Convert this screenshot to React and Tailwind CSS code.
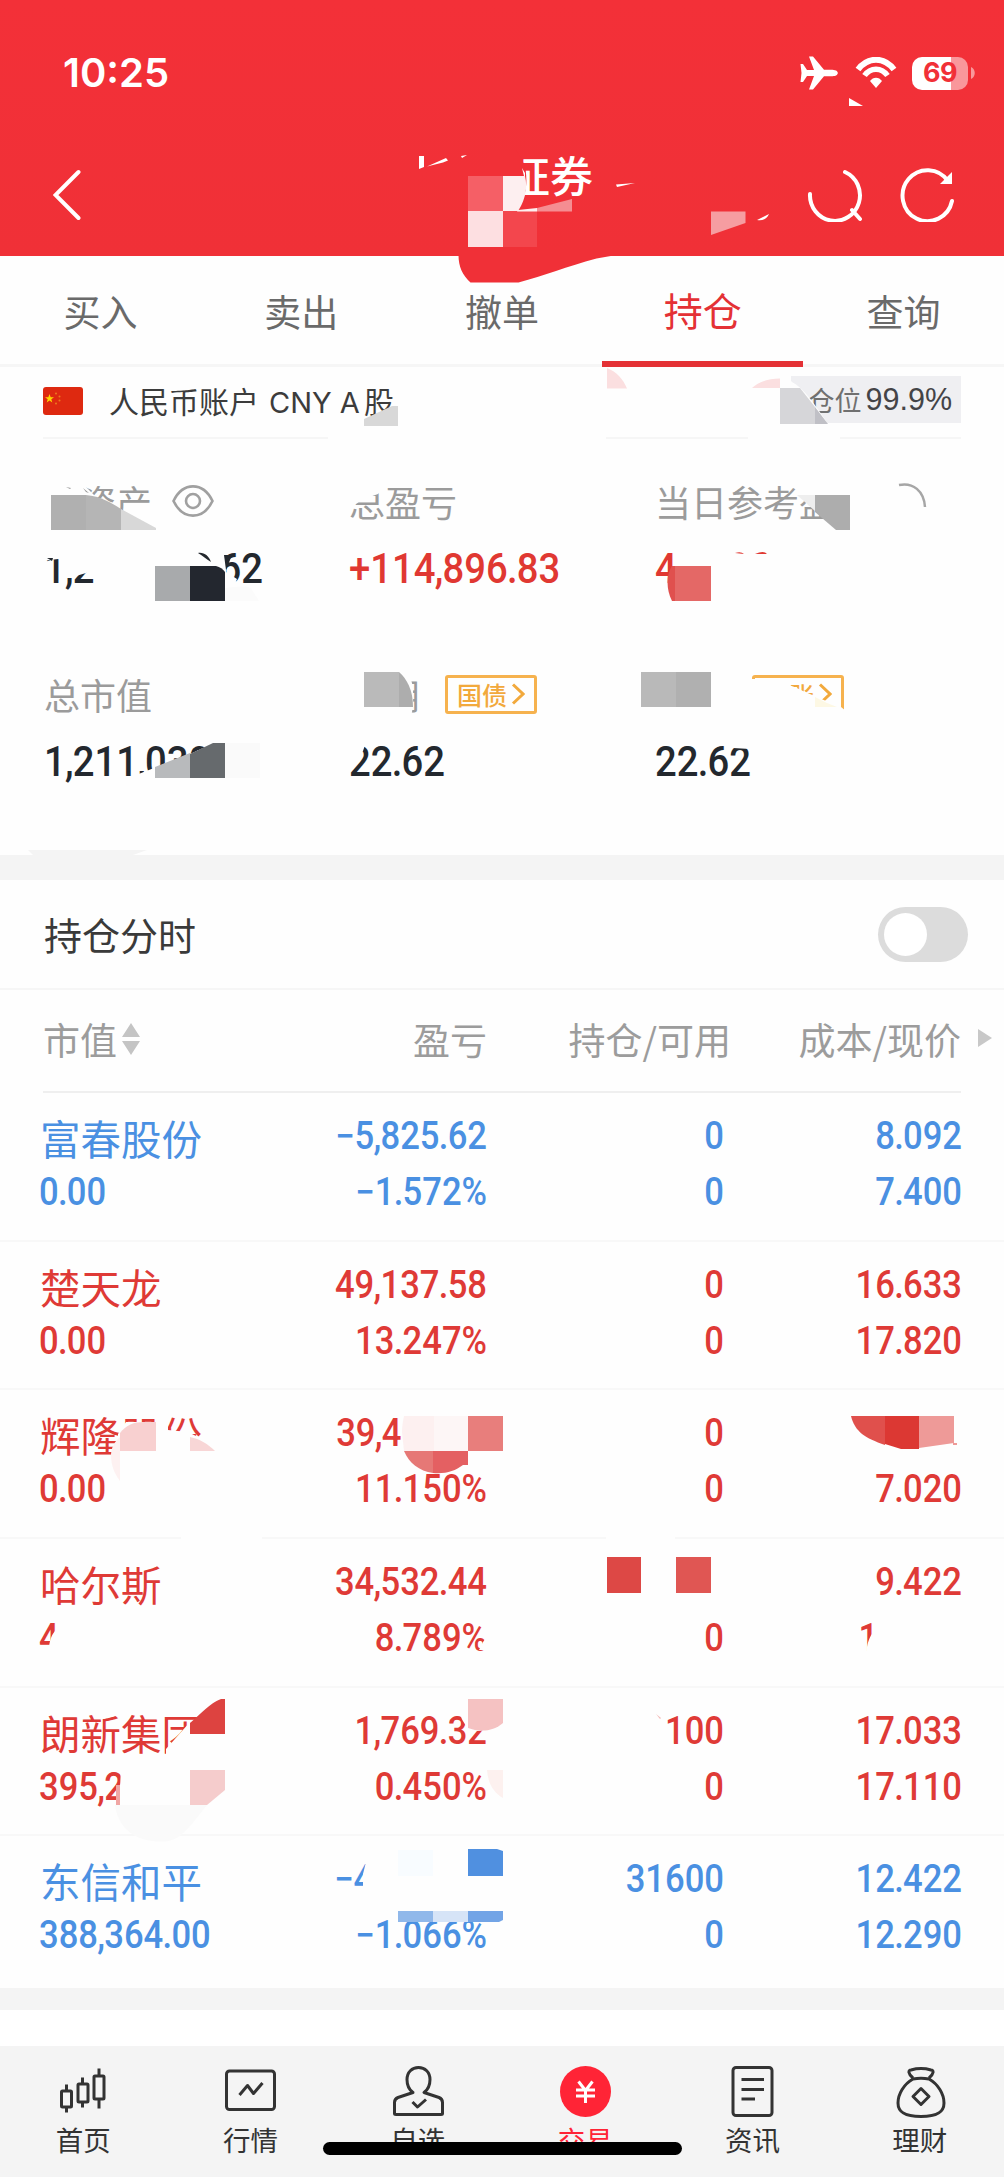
import React from "react";
import clsx from "clsx";

const TABS = ["买入", "卖出", "撤单", "持仓", "查询"];

const HOLDINGS = [
  { name: "富春股份", value: "0.00", profit: "−5,825.62", rate: "−1.572%", amount: "0", usable: "0", cost: "8.092", price: "7.400", down: true },
  { name: "楚天龙", value: "0.00", profit: "49,137.58", rate: "13.247%", amount: "0", usable: "0", cost: "16.633", price: "17.820" },
  { name: "辉隆股份", value: "0.00", profit: "39,4", rate: "11.150%", amount: "0", usable: "0", cost: "", price: "7.020", profitPad: "pr-[94px]" },
  { name: "哈尔斯", value: "4", profit: "34,532.44", rate: "8.789%", amount: "", usable: "0", cost: "9.422", price: "1", pricePad: "pr-[92px]" },
  { name: "朗新集团", value: "395,2", profit: "1,769.32", rate: "0.450%", amount: "100", usable: "0", cost: "17.033", price: "17.110" },
  { name: "东信和平", value: "388,364.00", profit: "−4", rate: "−1.066%", amount: "31600", usable: "0", cost: "12.422", price: "12.290", profitPad: "pr-[125px]", down: true },
];

// Narrow digits: Roboto squeezed towards the side it is aligned to, with tight points and commas
const Num = ({ children, right, className }) => (
  <span
    className={clsx(
      "block whitespace-pre font-['Roboto',sans-serif] font-medium scale-x-[0.91]",
      right ? "origin-right text-right" : "origin-left",
      className
    )}
  >
    {children.split(/([.,])/).map((part, i) =>
      i % 2 ? (
        <span key={i} className="-mx-[0.8px]">
          {part}
        </span>
      ) : (
        part
      )
    )}
  </span>
);

const StatusBar = () => (
  <div className="flex h-[146px] items-center justify-between pl-[63px] pr-[29px]">
    <span className="font-['Inter',sans-serif] text-[40px] font-semibold leading-none">10:25</span>
    <div className="flex items-center">
      <svg width="38" height="34" viewBox="0 0 38 34" fill="#fff">
        <path d="M36 14.5c2.4 1.3 2.4 3.7 0 5-1.200.6-3 .8-5 .8h-7L13 33.500h-4l5-13.400H7L3 26H.5l1-9-1-9H3l4 6h7L9 .5h4L24 13.700h7c2 0 3.800.200 5 .8z" />
      </svg>
      <svg className="ml-[17px]" width="42" height="32" viewBox="0 0 42 32" fill="none" stroke="#fff">
        <path d="M3 12.500C13-.5 29-.5 39 12.500" strokeWidth="6" />
        <path d="M9.500 18.500c6-8.500 17-8.500 23 0" strokeWidth="5.500" />
        <path d="M15 24c3-4.500 9-4.500 12 0l-6 7z" fill="#fff" stroke="none" />
      </svg>
      <div className="ml-[15px] flex h-[33px] w-[56px] items-center justify-center rounded-[10px] bg-linear-to-r from-white from-70% to-[#f9979b] to-70% font-['Inter',sans-serif] text-[27px] font-bold tracking-[-0.5px] text-[#f13037]">
        69
      </div>
      <svg className="ml-[3px]" width="4" height="12" viewBox="0 0 4 12">
        <path d="M0 0c5 2 5 10 0 12z" fill="#f9979b" />
      </svg>
    </div>
  </div>
);

const TitleBar = () => (
  <div className="flex h-[110px] items-start pl-[53px] pr-[49px]">
    <svg className="mt-[23px]" width="30" height="52" viewBox="0 0 30 52" fill="none" stroke="#fff" strokeWidth="4" strokeLinecap="round">
      <path d="M25.500 3 2.500 26l23 23" />
    </svg>
    <span className="ml-[424px] mt-[6px] text-[43px] font-medium leading-[44px]">证券</span>
    <div className="ml-auto mt-[20px] flex gap-[36px]">
      <svg width="56" height="56" viewBox="0 0 56 56" fill="none" stroke="#fff" strokeWidth="4" strokeLinecap="round">
        <path d="M38 6A25 25.500 0 1 1 3 28M45 44l8 9" />
      </svg>
      <svg width="56" height="56" viewBox="0 0 56 56" fill="none" stroke="#fff" strokeWidth="4">
        <path d="M53 35A25 25.500 0 1 1 49 15" strokeLinecap="round" />
        <path d="M53 6v12H41z" fill="#fff" stroke="none" />
      </svg>
    </div>
  </div>
);

const Tag = ({ children, className }) => (
  <span
    className={clsx(
      "flex h-[39px] w-[92px] items-center justify-center gap-[4px] rounded-[3px] border-[3px] border-[#f6b24e] text-[25px] font-medium leading-none text-[#f2a93c]",
      className
    )}
  >
    {children}
    <svg width="14" height="22" viewBox="0 0 14 22" fill="none" stroke="#f2a93c" strokeWidth="3">
      <path d="M2 1.500 12 11 2 20.500" />
    </svg>
  </span>
);

const Stat = ({ label, extra, value, tone = "text-[#23282e]", className }) => (
  <div className={className}>
    <div className="flex h-[40px] items-center text-[36px] leading-[36px] text-[#9b9b9b]">
      {label}
      {extra}
    </div>
    <Num className={clsx("mt-[24px] text-[42px] leading-[48px]", tone)}>{value}</Num>
  </div>
);

const Account = () => (
  <section className="h-[488px] pl-[43px] pr-[43px]">
    <div className="flex h-[72px] items-center border-b-2 border-[#f6f6f6] pb-[2px]">
      <svg className="rounded-[3px]" width="40" height="28" viewBox="0 0 40 28">
        <rect width="40" height="28" fill="#de2910" />
        <path d="m6.500 7 1.200 3.300h3.300L8.300 12.300l1 3.200-2.800-2-2.800 2 1-3.200L2 10.300h3.300z" fill="#ffd500" />
        <g fill="#ee7a20">
          <circle cx="13" cy="6.500" r="1" />
          <circle cx="16.500" cy="9.500" r="1" />
          <circle cx="16.500" cy="13.500" r="1" />
          <circle cx="13" cy="16.500" r="1" />
        </g>
      </svg>
      <span className="ml-[26px] whitespace-pre text-[30px] leading-none text-[#3c3c3c]">
        人民币账户
        <span className="ml-[10px] mr-[4px] font-['Inter',sans-serif] text-[29px]">CNY A</span>
        股
      </span>
      <span className="mb-[4px] ml-auto flex h-[47px] w-[170px] items-center justify-end bg-[#efeff2] pr-[9px] text-[27px] leading-none text-[#707070]">
        仓位
        <span className="ml-[4px] font-['Liberation_Sans',sans-serif] text-[30.5px] text-[#444447]">99.9%</span>
      </span>
    </div>
    <div className="flex pt-[42px]">
      <Stat
        className="w-[305px] pl-px"
        label="总资产"
        value="1,211,030.62"
        extra={
          <svg className="ml-[20px]" width="42" height="32" viewBox="0 0 42 32" fill="none" stroke="#a0a0a0" strokeWidth="2.600">
            <path d="M1.500 16C11-3.500 31-3.500 40.500 16 31 35.500 11 35.500 1.500 16z" />
            <circle cx="21" cy="16" r="7" />
          </svg>
        }
      />
      <Stat className="w-[307px] pl-px" label="总盈亏" value="+114,896.83" tone="text-[#e03832]" />
      <Stat label="当日参考盈" value="4" tone="text-[#e03832]" />
    </div>
    <div className="flex pt-[81px]">
      <Stat className="w-[305px] pl-px" label="总市值" value="1,211,030" />
      <Stat className="w-[307px] pl-px" label="可用" value="22.62" extra={<Tag className="ml-[24px]">国债</Tag>} />
      <Stat label="可取" value="22.62" extra={<Tag className="ml-[25px]">转账</Tag>} />
    </div>
  </section>
);

const Holding = ({ row }) => (
  <div
    className={clsx(
      "grid h-[148.700px] grid-cols-[247px_200px_236px_238px] border-b-2 border-[#f8f8f8] pl-[40px] pt-[23px] text-[38px] leading-[40px] last:border-transparent",
      row.down ? "text-[#4a90e2]" : "text-[#df3a36]"
    )}
  >
    <div>
      <span className="block h-[56px] text-[40.5px] leading-[44px]">{row.name}</span>
      <Num className="-ml-px">{row.value}</Num>
    </div>
    <div>
      <Num right className={clsx("h-[56px]", row.profitPad)}>{row.profit}</Num>
      <Num right>{row.rate}</Num>
    </div>
    <div className="-mr-px">
      <Num right className="h-[56px]">{row.amount}</Num>
      <Num right>{row.usable}</Num>
    </div>
    <div className="-mr-px">
      <Num right className="h-[56px]">{row.cost}</Num>
      <Num right className={row.pricePad}>{row.price}</Num>
    </div>
  </div>
);

const Positions = () => (
  <section className="h-[1108px]">
    <div className="flex h-[110px] items-center justify-between border-b-2 border-[#f6f6f6] pl-[44px] pr-[36px]">
      <span className="text-[38px] leading-none text-[#3a3a3a]">持仓分时</span>
      <button className="flex h-[55px] w-[90px] items-center rounded-full bg-[#dcdcdc] pl-[6px]" aria-label="持仓分时">
        <span className="h-[43px] w-[43px] rounded-full bg-white" />
      </button>
    </div>
    <div className="relative mx-[43px] grid h-[103px] grid-cols-[244px_200px_244px_230px] items-center border-b-2 border-[#efefef] pb-[3px] text-[37px] leading-none text-[#9c9c9c]">
      <span className="flex items-center gap-[5px]">
        市值
        <svg width="18" height="32" viewBox="0 0 18 32" fill="#c4c4c4">
          <path d="M9 0l9 14H0zM9 32l9-14H0z" />
        </svg>
      </span>
      <span className="text-right">盈亏</span>
      <span className="text-right">持仓/可用</span>
      <span className="text-right">成本/现价</span>
      <svg className="absolute -right-[31px] top-[39px]" width="14" height="18" viewBox="0 0 14 18">
        <path d="M0 0l14 9L0 18z" fill="#c8c8c8" />
      </svg>
    </div>
    {HOLDINGS.map((row) => (
      <Holding key={row.name} row={row} />
    ))}
  </section>
);

const NAV = [
  {
    label: "首页",
    icon: (
      <g>
        <path d="M8.500 18.500v6m0 16v6M24.500 11.500v6m0 18v6M41 2.500v7m0 23v10" />
        <rect x="3.500" y="25" width="10" height="16" rx="1" />
        <rect x="20" y="18" width="10" height="18" rx="1" />
        <rect x="36" y="10" width="10" height="23" rx="1" />
      </g>
    ),
  },
  {
    label: "行情",
    icon: (
      <g>
        <rect x="1.500" y="5" width="48" height="38.500" rx="3" />
        <path d="m14.500 29 8-9.500 6 8 9-10.500" />
      </g>
    ),
  },
  {
    label: "自选",
    icon: (
      <g>
        <path d="M20 26.500c-5-3.500-6-8-6-13C14 6 19 1.500 25.500 1.500S37 6 37 13.500c0 5-1 9.500-6 13l15 5c2.500 1 3.500 2.500 3.500 5v11q0 1-1.500 1H3q-1.500 0-1.500-1v-11c0-2.500 1-4 3.500-5z" />
        <path d="m19.500 36 5 5 8.500-7.500" />
      </g>
    ),
  },
  {
    label: "交易",
    active: true,
    icon: (
      <g>
        <circle cx="25.500" cy="25.500" r="25.500" fill="#ff2436" stroke="none" />
        <path d="m18.500 15.500 7 9 7-9M16 24h19M16 30h19M25.500 24v13" stroke="#fff" />
      </g>
    ),
  },
  {
    label: "资讯",
    icon: (
      <g>
        <rect x="6" y="1.500" width="39" height="48" rx="3" />
        <path d="M14.500 13.500H37M14.500 23.500H37M14.500 33H28" />
      </g>
    ),
  },
  {
    label: "理财",
    icon: (
      <g>
        <path d="M18 12c-5-4-5-8-2-8 7-2 13-2 20 0 3 0 3 4-2 8M18 13c5-1 11-1 16 0 9 5 15 15 15 24 0 8-5 13.500-23 13.500S3 45 3 37c0-9 6-19 15-24z" />
        <path d="m26 22.500 8 8-8 8-8-8z" />
      </g>
    ),
  },
];

const BottomNav = () => (
  <nav className="relative flex h-[131px] bg-[#f4f4f4]">
    {NAV.map((item) => (
      <div key={item.label} className={clsx("flex flex-1 flex-col items-center pt-[20px]", item.active ? "text-[#ff2436]" : "text-[#333]")}>
        <svg width="51" height="52" viewBox="0 0 51 52" fill="none" stroke="currentColor" strokeWidth="3" strokeLinejoin="round">
          {item.icon}
        </svg>
        <span className="mt-[4px] pr-px text-[27.5px] leading-[34px]">{item.label}</span>
      </div>
    ))}
    <div className="absolute left-[323px] top-[96px] h-[13px] w-[359px] rounded-full bg-black" />
  </nav>
);

// Erased strokes and mosaic tiles that hide the private figures
const Redactions = () => (
  <svg className="pointer-events-none absolute left-0 top-0" width="1004" height="2177" viewBox="0 0 1004 2177">
    {/* title bar */}
    <g>
      <path d="M490 150h26c5 8 8 12 9.500 20 2 12 1 25-7.500 42h-28z" fill="#f13037" />
      <path d="M522 168l3 5v7z" fill="#fff" />
      <path d="M419 156h5v11l-5 2zM427 166.500l19-8.500 2 2.500-5 2zM461 156l6-1-5 3zM616 184.500l19-1.500-18 4zM757 220l12-6c-2 5-6 7-12 6zM849 98l14 8h-14z" fill="#fff" />
      <path d="M468 176h35v35h-35z" fill="#f55f66" />
      <path d="M503 176h22c3 12 0 24-7 35h-15z" fill="#fdeff0" />
      <path d="M468 211h35v36h-35z" fill="#fddfe1" />
      <path d="M503 211h34v36h-34z" fill="#f3464d" />
      <path d="M537 208l35-9v12.500h-35z" fill="#f58d92" />
      <path d="M518 210l19-2v3.500h-20z" fill="#fdeff0" />
      <path d="M711 211.500h34.500V223L711 235z" fill="#f69da1" />
      <path d="M458.500 255c0 12 4 20 12 27.500h48c26-7 48-16 78-24l20-3.500z" fill="#f03037" />
    </g>

    {/* account line */}
    <g>
      <path d="M364 419l28-13h6v20h-34z" fill="#d8d8d8" />
      <path d="M328 434h278v8H328zM748 434h92v8h-92z" fill="#fefefe" />
      <path d="M607 368c10 4 16 11 20 20.500h-20zM752 388c8-7 18-9.500 28-9.500v9.500z" fill="#fbdfe0" />
      <path d="M785 374l7 8c12 6 24 24 36 42v4h-43z" fill="#fefefe" />
      <path d="M780 388h20l15 19v17h-35z" fill="#d6d6d9" />
      <path d="M815 407l13 17h-13z" fill="#c0c0c6" />
    </g>

    {/* first row of figures */}
    <g>
      <path d="M40 480h39l16 16-5 24H40z" fill="#fefefe" />
      <path d="M66 487l5 1-1 1zM83 488l6 5-3-1z" fill="#999" />
      <path d="M51 495h35v35H51z" fill="#b0b0b0" />
      <path d="M86 495c14 1 26 8 35 14v21H86z" fill="#b5b5b5" />
      <path d="M121 509l35 19v2h-35z" fill="#d8d8d8" />
      <path d="M345 480h33v14l-14 5-16 10z" fill="#fefefe" />
      <path d="M795 482h6v14l16 14 20 20h15v-50h-38z" fill="#fefefe" />
      <path d="M797 495h18v16z" fill="#eee" />
      <path d="M815 495h35v35h-14l-21-18z" fill="#adadad" />
      <path d="M899 485c14-3 25 6 26 22" fill="none" stroke="#a6a6a6" strokeWidth="2.500" />
      <path d="M42 548h56v19l-12 6-10 3-4-14-14-3-16 2zM95 548h102v50H95z" fill="#fefefe" />
      <path d="M47 558h6l-1 3z" fill="#23282e" />
      <path d="M197 548h29v24l11 7-4 10h-38z" fill="#fefefe" />
      <path d="M198 553c6-1 11 3 13 9-5-3-8-6-13-9z" fill="#23282e" />
      <path d="M226 570l6-15h-8z" fill="#23282e" />
      <path d="M155 566h35v35h-35z" fill="#a8aaac" />
      <path d="M190 566h26c4 1 7 3 9 6v29h-35z" fill="#23272f" />
      <path d="M225 588c10-1 20-3 26 0l8 13h-34z" fill="#fbfbfb" />
      <path d="M675 566h36v35h-36z" fill="#e46866" />
      <path d="M675 566v35h-3c-6-12-6-26 0-35z" fill="#e0504e" />
      <path d="M755 554q9-4 12 0zM735 553q6-2 9 1z" fill="#e03832" />
    </g>

    {/* second row of figures */}
    <g>
      <path d="M346 668h60c8 12 9 30 5 50h-65z" fill="#fefefe" />
      <path d="M364 672h35v35h-35z" fill="#bababa" />
      <path d="M399 672c8 7 14 18 14 35h-14z" fill="#adadad" />
      <path d="M640 670h111v47H640zM749 679h14c16 2 26 5 40 12l30 13 8 3 5 4v8h-97z" fill="#fefefe" />
      <path d="M641 672h35v35h-35z" fill="#b9b9b9" />
      <path d="M676 672h35v35h-35z" fill="#b0b0b0" />
      <path d="M815 697l12 6 10 4h-22z" fill="#fdf8e4" />
      <path d="M136 775l54-21 24-11h20v46h-98z" fill="#fefefe" />
      <path d="M155 767l35-14v25h-35z" fill="#b8babc" />
      <path d="M190 754l23-11h12v35h-35z" fill="#666a6d" />
      <path d="M225 743h35v35h-35z" fill="#fafafa" />
      <path d="M346 742h20l-3 9-17 14zM730 742h20v7l-17-1z" fill="#fefefe" />
      <path d="M28 850h119l-14 5H33z" fill="#f4f4f4" />
    </g>

    {/* holdings */}
    <g fill="#fefefe">
      <path d="M118 1458v-24l8-12h30v-8h12v16l20 2 20 10v20h-90z" />
      <path d="M181 1535h81v6h-81zM606 1535h69v6h-69z" />
      <path d="M56 1620v10c-4 4-6 9-7 17h-12v10h26v-37zM489 1634l-6 8-4 8h12z" />
      <path d="M872 1620v14c-3 4-5 10-6 20h18v-34z" />
      <path d="M190 1722l-24 27v7h37v-38zM121 1766h26v45h-28z" />
      <path d="M458 1708h30v20c-8 4-14 4-20-1-5-4-7-9-10-19z" />
      <path d="M662 1735h9l7 26h-16zM370 1846h10v50h-17v-22z" />
      <path d="M398 1905h105v16H398z" />
    </g>
    <g>
      <path d="M111 1455c0-7 4-14 9-18v44c-6-8-9-16-9-26z" fill="#fdf1f1" />
      <path d="M120 1433c6-8 14-11 24-11h12v29h-36z" fill="#f8d0d0" />
      <path d="M190 1437c10 2 18 7 25 14h-25z" fill="#f8d6d6" />
      <path d="M402 1432c0-6 1-11 2-16h30v35h-30z" fill="#fdf0f0" />
      <path d="M434 1416h34v35h-34z" fill="#fdf6f6" />
      <path d="M468 1416h35v35h-35z" fill="#e87e7c" />
      <path d="M404 1451h29v22c-14-2-24-10-29-22z" fill="#e67876" />
      <path d="M433 1451h35v14h-5c-8 6-17 9-30 8z" fill="#e46062" />
      <path d="M851 1416h34v29c-20-7-30-13-34-29z" fill="#e0504c" />
      <path d="M885 1416h34v33h-18l-16-5z" fill="#dc3833" />
      <path d="M919 1416h35v27l-35 5z" fill="#ee9a98" />
      <path d="M953 1443h4v2h-4z" fill="#ee9a98" />
      <path d="M607 1557h34v36h-34z" fill="#dd4845" />
      <path d="M676 1557h35v36h-35z" fill="#e05653" />
      <path d="M225 1699v35h-35v-11c12-10 20-20 31-24z" fill="#dd4340" />
      <path d="M190 1770h35v20l-18 15h-17z" fill="#f5cccc" />
      <path d="M115 1805h92c-12 14-22 32-38 36-24 3-50-6-54-36z" fill="#fafafa" />
      <path d="M116 1785h4v20h-4z" fill="#f0a6a4" />
      <path d="M468 1699h35v24c-10 9-24 9-35 5z" fill="#f5c2c2" />
      <path d="M487 1770h16v28c-9-5-15-14-16-28z" fill="#fdf1ef" />
      <path d="M656 1714l5 4-1 1z" fill="#f3b8b6" />
      <path d="M398 1850h35v26h-35z" fill="#f8fcff" />
      <path d="M468 1849h29l6 2v25h-35z" fill="#5090e0" />
      <path d="M398 1911h35v11h-35z" fill="#90b8ea" />
      <path d="M433 1911h35v11h-35z" fill="#d6e4f7" />
      <path d="M468 1911h35v9l-4 2h-31z" fill="#72a4e6" />
    </g>
  </svg>
);

export default function App() {
  return (
    <div className="relative flex h-[2177px] w-[1004px] flex-col overflow-hidden bg-[#fefefe] font-['Noto_Sans_CJK_SC',sans-serif]">
      <header className="h-[256px] shrink-0 bg-linear-to-b from-[#f33038] to-[#f03037] text-white">
        <StatusBar />
        <TitleBar />
      </header>
      <div className="grid h-[111px] shrink-0 grid-cols-5 border-b-[3px] border-[#f6f6f6]">
        {TABS.map((tab) => (
          <div
            key={tab}
            className={clsx(
              "flex h-[111px] items-center justify-center leading-none",
              tab === "持仓" ? "border-b-[6px] border-[#e43135] pt-px text-[39px] text-[#e43135]" : "pb-px text-[37px] text-[#6a6a6a]"
            )}
          >
            {tab}
          </div>
        ))}
      </div>
      <Account />
      <div className="h-[25px] shrink-0 bg-[#f4f4f4]" />
      <Positions />
      <div className="h-[22px] shrink-0 bg-[#f4f4f4]" />
      <div className="h-[36px] shrink-0 bg-white" />
      <BottomNav />
      <Redactions />
    </div>
  );
}
